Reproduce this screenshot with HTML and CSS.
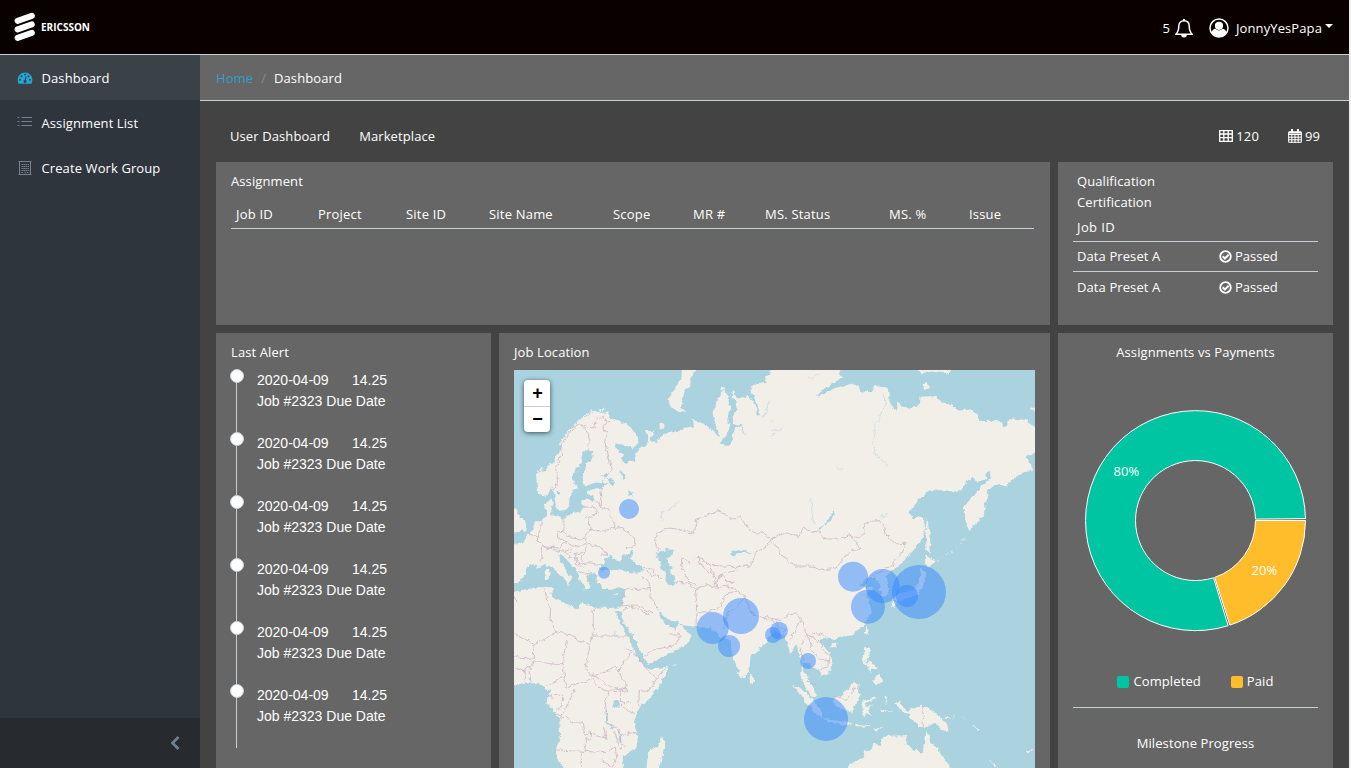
FILE: index.html
```html
<!DOCTYPE html>
<html lang="en">
<head>
<meta charset="utf-8">
<title>Dashboard</title>
<link rel="stylesheet" href="styles.css">
</head>
<body>
<div class="app">
<header class="topbar">
  <div class="brand">
    <svg width="22" height="30" viewBox="0 0 22 30"><g stroke="#fff" stroke-width="6" stroke-linecap="round"><path d="M3.6 8.8 17.8 3.8M3.6 17.4 17.8 12.4M3.6 25.8 17.8 20.8"/></g></svg>
    <span class="brand-name">ERICSSON</span>
  </div>
  <div class="user-area">
    <span class="bell-count">5</span>
    <svg class="bell" width="20" height="20" viewBox="0 0 20 20"><path d="M1.800 16.200c2.200-2 3-4.500 3-8.200 0-3.200 2-5.300 5.200-5.300s5.200 2.100 5.200 5.300c0 3.700.8 6.200 3 8.200z" fill="none" stroke="#fff" stroke-width="1.500" stroke-linejoin="round"/><path d="M9 1h2v2H9zM7.200 17h5.600a2.800 2.500 0 0 1-5.600 0z" fill="#fff"/></svg>
    <svg class="avatar" width="20" height="20" viewBox="0 0 20 20"><circle cx="10" cy="10" r="9" fill="none" stroke="#fff" stroke-width="1.500"/><path d="M2.600 14.800c.4-2.700 2-3.800 4-4a5 5 0 0 0 6.800 0c2 .2 3.600 1.300 4 4A9 9 0 0 1 2.600 14.800z" fill="#fff"/><circle cx="10" cy="7.800" r="4.100" fill="#fff"/></svg>
    <span class="user-name">JonnyYesPapa</span><i class="caret"></i>
  </div>
</header>
<div class="body">
<nav class="sidebar">
  <a class="nav-item active"><svg width="16" height="14" viewBox="0 0 16 14"><path d="M8 1.500a7.500 7.500 0 0 0-6.300 11.300h12.600A7.500 7.500 0 0 0 8 1.500z" fill="#20a8d8"/><g fill="#3a4248"><circle cx="8" cy="3.600" r="1"/><circle cx="4.500" cy="5.200" r="1"/><circle cx="11.500" cy="5.200" r="1"/><circle cx="3" cy="8.800" r="1"/><circle cx="13" cy="8.800" r="1"/><path d="M8.500 5.300 9.500 5.600 8.900 9a1.600 1.600 0 1 1-1.200-.2z"/></g></svg><span>Dashboard</span></a>
  <a class="nav-item"><svg width="16" height="14" viewBox="0 0 16 14"><path d="M4.500 1.500H15M4.500 5.500H15M4.500 9.500H15M.5 1.500h2M.5 5.500h2M.5 9.500h2" stroke="#73818f"/></svg><span>Assignment List</span></a>
  <a class="nav-item"><svg width="16" height="16" viewBox="0 0 16 16"><path d="M2.500 1.500h11v13h-11zM1.500 1.500h13M1.500 14.500h13" fill="none" stroke="#73818f"/><path d="M4.500 4.500H12M4.500 6.500H12M4.500 8.500H12M4.500 10.500H12M4.500 12.500H6.500M10 12.500h2M8.300 11.500v3" stroke="#73818f" stroke-dasharray="1.500 .5"/></svg><span>Create Work Group</span></a>
  <div class="minimizer"><svg width="10" height="14" viewBox="0 0 10 14"><path d="M8.500 1 2.500 7l6 6" fill="none" stroke="#73818f" stroke-width="2.600"/></svg></div>
</nav>
<main class="main">
  <div class="crumbs"><a>Home</a><span class="slash">/</span><span>Dashboard</span></div>
  <div class="tabs">
    <span>User Dashboard</span><span class="tab-two">Marketplace</span>
    <span class="counter push"><svg width="14" height="12" viewBox="0 0 14 12"><path d="M.7.700h12.600v10.600H.7zM0 4h14M0 7.600h14M4.800 0v12M9.200 0v12" fill="none" stroke="#fff" stroke-width="1.300"/></svg>120</span>
    <span class="counter"><svg width="14" height="14" viewBox="0 0 14 14"><path d="M.7 3h12.600v10.300H.7zM0 5.500h14M0 8.200h14M0 10.800h14M3.800 5v9M7 5v9M10.200 5v9" fill="none" stroke="#fff"/><path d="M.7 2.500h12.600v2H.7zM3 0h2v4H3zM9 0h2v4H9z" fill="#fff"/></svg>99</span>
  </div>
  <div class="grid">
    <section class="card assignment">
      <h2>Assignment</h2>
      <div class="thead"><span>Job ID</span><span>Project</span><span>Site ID</span><span>Site Name</span><span>Scope</span><span>MR #</span><span>MS. Status</span><span>MS. %</span><span>Issue</span></div>
    </section>
    <section class="card qualification">
      <h2>Qualification<br>Certification</h2>
      <div class="qhead">Job ID</div>
      <div class="qrow"><span>Data Preset A</span><span class="passed"><svg width="13" height="13" viewBox="0 0 13 13"><circle cx="6.500" cy="6.500" r="5.300" fill="none" stroke="#fff" stroke-width="1.800"/><path d="M3.700 6.300 5.900 8.500 9.700 4.700" fill="none" stroke="#fff" stroke-width="2"/></svg>Passed</span></div>
      <div class="qrow"><span>Data Preset A</span><span class="passed"><svg width="13" height="13" viewBox="0 0 13 13"><circle cx="6.500" cy="6.500" r="5.300" fill="none" stroke="#fff" stroke-width="1.800"/><path d="M3.700 6.300 5.900 8.500 9.700 4.700" fill="none" stroke="#fff" stroke-width="2"/></svg>Passed</span></div>
    </section>
    <section class="card alerts">
      <h2>Last Alert</h2>
      <ul class="timeline">
        <li><div><span class="date">2020-04-09</span><span>14.25</span></div><div>Job #2323 Due Date</div></li>
        <li><div><span class="date">2020-04-09</span><span>14.25</span></div><div>Job #2323 Due Date</div></li>
        <li><div><span class="date">2020-04-09</span><span>14.25</span></div><div>Job #2323 Due Date</div></li>
        <li><div><span class="date">2020-04-09</span><span>14.25</span></div><div>Job #2323 Due Date</div></li>
        <li><div><span class="date">2020-04-09</span><span>14.25</span></div><div>Job #2323 Due Date</div></li>
        <li><div><span class="date">2020-04-09</span><span>14.25</span></div><div>Job #2323 Due Date</div></li>
      </ul>
    </section>
    <section class="card location">
      <h2>Job Location</h2>
      <div class="map">
        <svg width="521" height="398" viewBox="12 12 1563 1194">
          <defs><filter id="coast" filterUnits="userSpaceOnUse" x="-20" y="-20" width="1630" height="1260" color-interpolation-filters="sRGB"><feTurbulence type="fractalNoise" baseFrequency=".06" numOctaves="3" seed="4"/><feDisplacementMap in="SourceGraphic" scale="16" xChannelSelector="R" yChannelSelector="G"/></filter></defs>
          <rect x="12" y="12" width="1563" height="1194" fill="#aad3df"/>
          <g filter="url(#coast)">
          <g fill="#f2efe9">
            <!-- Eurasia and Africa -->
            <path d="M-10 542 28 530 40 532 46 512 60 500 72 478 84 464 100 456 112 450 108 430 104 412 124 400 130 412 122 424 128 434 122 446 136 450 150 452 166 456 190 440 214 436 222 420 216 416 218 402 228 394 240 406 252 402 250 388 232 384 228 376 250 370 274 370 276 362 292 356 276 348 250 352 222 362 216 340 222 320 228 300 246 278 250 256 238 250 222 256 214 270 216 290 196 308 186 324 186 342 196 354 206 362 190 374 180 390 178 412 166 432 148 434 138 420 134 396 132 374 126 364 118 380 96 392 84 382 80 352 78 326 92 318 104 316 112 300 130 290 140 272 154 250 152 234 162 212 176 194 198 176 214 160 236 148 252 134 274 140 296 140 298 154 326 164 352 176 380 202 387 228 370 246 340 238 314 232 322 250 342 266 334 282 348 290 376 284 372 262 396 240 412 240 412 216 408 196 428 194 432 204 422 212 426 230 446 224 452 212 482 196 520 194 520 184 550 186 552 170 540 150 554 166 584 174 608 194 626 214 624 190 610 162 608 136 616 122 622 92 640 76 654 86 656 110 662 130 654 152 658 184 652 210 628 232 652 240 668 220 670 192 690 180 706 210 694 176 672 174 668 152 680 126 676 104 662 92 672 72 680 100 706 90 730 106 742 126 744 150 750 146 742 112 726 84 724 58 770 50 764 32 784 24 774-10H1000L990 24 1000 36 968 50 934 74 920 94 970 68 1018 54 1046 62 1050 74 1090 76 1092 54 1132 66 1140 80 1138 102 1156 136 1166 106 1174 122 1188 128 1210 120 1228 124 1232 92 1276 90 1282 98 1316 114 1334 126 1340 136 1376 128 1400 142 1404 164 1470 166 1480 184 1492 180 1494 156 1546 162 1595 192V254L1546 274 1560 284 1568 316 1540 318 1516 336 1488 358 1470 354 1440 362 1430 380 1436 390 1424 410 1428 430 1420 450 1394 476 1378 496 1366 462 1364 420 1384 394 1402 378 1420 352 1440 334 1444 318 1434 316 1428 336 1402 350 1394 332 1370 344 1352 376 1326 376 1304 372 1256 374 1240 388 1192 442 1206 448 1208 460 1230 452 1244 462 1244 500 1232 526 1214 550 1192 572 1172 596 1158 602 1144 614 1126 630 1138 660 1136 684 1118 690 1108 676 1114 654 1098 644 1096 630 1062 644 1050 660 1068 666 1096 660 1070 684 1074 700 1084 732 1074 754 1060 780 1032 802 996 812 970 820 940 816 932 832 954 856 968 884 964 914 934 930 930 916 910 904 896 892 878 888 880 916 904 954 922 994 902 988 882 958 874 932 876 886 866 858 858 836 840 864 834 830 820 808 800 796 776 816 768 832 738 858 722 870 718 916 708 922 704 932 694 936 682 912 672 884 662 846 658 818 636 820 622 810 616 792 602 784 568 784 520 778 506 766 474 760 450 738 448 752 468 778 494 788 510 772 528 796 546 808 532 832 508 846 470 868 410 894 402 870 386 844 364 800 344 776 330 736 314 740 330 764 344 798 362 832 376 866 396 892 412 910 470 902 468 926 450 956 420 996 394 1020 376 1048 372 1070 384 1110 380 1140 342 1172 334 1230H168L140 1174 138 1150 150 1110 148 1060 132 1036 112 1012 118 976 102 962 84 950 40 954-10 964V682L48 670 86 664 130 664 124 686 136 700 166 712 200 730 208 726 214 708 250 724 300 726 330 724 342 706 344 668 326 664 302 672 276 668 264 650 262 626 244 618 228 624 232 644 244 666 226 674 218 656 204 620 186 600 166 576 148 566 150 582 168 612 186 632 182 644 174 658 158 632 128 606 108 594 86 604 60 594 46 616 44 634 26 650-10 658z"/>
            <path d="M-10 426 22 428 24 448 44 464 48 478 46 496-10 502z"/>
            <path d="M516-10 514 40 488 74 476 100 480 122 510 140 526 138 514 120 522 82 540 56 560-10zM448 172 462 170 464 182 450 188zM632 66 646 64 644 74 632 76z"/>
            <!-- Arctic, Sakhalin and Japan -->
            <path d="M1200 0 1236 22 1260 16 1290 20 1320 22 1330 0zM1234 52 1252 48 1260 66 1240 72zM1560 130 1595 106V134zM1252 452 1256 486 1264 524 1258 540 1260 560 1248 550 1250 520 1246 496zM1246 568 1276 588 1256 602 1244 594zM1234 602 1246 620 1244 644 1236 668 1220 690 1194 696 1156 706 1144 696 1172 680 1204 676 1224 656 1230 628zM1144 702 1156 710 1154 726 1146 720zM1072 782 1078 794 1072 808 1064 800zM966 832 982 830 980 844 964 844z"/>
            <!-- Philippines and Indonesia -->
            <path d="M1064 842 1080 846 1078 872 1066 884 1080 902 1064 894 1058 876zM1096 930 1110 924 1116 948 1100 958 1088 944zM1074 882 1096 898 1102 910 1084 908 1080 920 1074 900zM1036 934 1060 910 1040 930zM848 958 866 962 894 988 914 1008 932 1032 940 1056 924 1050 896 1020 872 986zM938 1058 968 1062 1014 1068 1030 1074 1012 1078 960 1070zM970 1000 990 992 1012 970 1034 946 1046 958 1044 976 1050 986 1038 1014 1026 1038 1004 1030 982 1026zM1056 1004 1100 994 1098 1000 1064 1010 1068 1024 1086 1016 1074 1032 1086 1050 1070 1042 1062 1052 1054 1032zM1152 1010 1176 1008 1176 1024 1194 1034 1230 1016 1266 1034 1298 1058 1320 1094 1294 1088 1276 1068 1254 1082 1236 1086 1216 1072 1196 1044 1170 1032zM1126 986 1132 992 1126 1008 1132 1018 1124 1010zM1036 1074 1080 1078 1078 1082 1036 1080zM1088 1092 1118 1082 1098 1098zM1112 1032 1156 1036 1112 1038zM1302 1052 1324 1056 1340 1038 1330 1052 1312 1060zM1354 1050 1366 1064 1380 1070 1362 1062zM1384 1076 1410 1092 1404 1096z"/>
            <!-- Australia, Madagascar and Sri Lanka -->
            <path d="M980 1226 1006 1206 1060 1174 1066 1150 1080 1156 1092 1134 1110 1136 1116 1118 1136 1106 1150 1112 1196 1110 1186 1134 1206 1146 1232 1160 1240 1152 1246 1096 1254 1098 1262 1132 1286 1150 1300 1178 1318 1196 1330 1226zM408 1226 414 1156 440 1144 458 1110 466 1134 442 1226zM718 920 732 934 732 950 720 954zM1436 1182 1462 1200 1458 1204zM1548 1156 1570 1148 1556 1164zM106 612 118 612 116 642 108 642zM108 586 116 584 114 606zM312 686 328 682 318 690zM490 898 500 896 496 900z"/>
            <path d="M1280 586 1308 568 1330 554 1352 534 1366 514" fill="none" stroke="#f2efe9" stroke-width="2" stroke-dasharray="8 9"/>
            <path d="M186 188 210 162M222 152 246 134M268 134 282 128M150 236 162 216M82 318 100 308" fill="none" stroke="#f2efe9" stroke-width="7" stroke-dasharray="8 3"/>
          </g>
          <!-- Inland seas and lakes -->
          <g fill="#aad3df">
            <path d="M286 578 304 564 312 580 334 584 330 572 352 564 370 552 374 562 356 574 376 590 400 606 400 616 384 620 350 618 324 608 300 616 270 612 274 600zM440 566 456 558 468 548 490 552 488 566 474 572 470 590 488 606 480 620 496 636 494 656 474 656 466 642 468 620 454 604zM972 430 974 444 956 470 928 492 922 488 944 476 960 452zM294 340 304 334 316 352 310 358 296 348zM330 312 342 324 346 340 338 342zM354 376 366 382 368 392 358 388zM308 1004 326 1002 326 1022 308 1024zM142 372 154 378 146 388zM664 566 670 554 704 554 732 560 708 560 680 562 668 572zM270 330 290 320 294 340 280 330z"/>
          </g>
          <g fill="none" stroke="#aad3df" stroke-width="2">
            <path d="M1122 84 1126 120 1110 150 1094 184 1088 226 1100 270 1132 298M784 198 820 186M780 214 802 200M780 160 790 170M902 400 910 470 916 476M456 464 454 440 474 434 510 402M1112 450 1134 446M978 302 996 310M890 30 904 40 920 26 934 28M780 104 760 158M268 378 274 396M314 792 318 812" stroke-opacity=".75"/>
            <path d="M288 1034 292 1068 308 1086M326 1094 332 1130" stroke-width="5"/>
          </g>
          <!-- National borders -->
          <g fill="none" stroke="#cbb5c3" stroke-width="2.400" stroke-linejoin="round">
            <path d="M132 374 142 350 140 296 154 270 158 234 176 204 196 180 212 172 232 186 252 184 262 158 280 154 288 166 278 184 290 206 286 240 298 276 304 314 276 350M212 176 236 204 238 248M284 172 300 166M270 374 272 398 270 424 298 432 300 454 314 474 314 488 338 484 352 500 378 516 376 536 348 548M228 394 262 404 270 420M218 424 248 420 264 430 258 446 236 454 222 452M160 456 158 496 184 516 226 520 240 484 236 454M232 490 290 492 314 484M94 462 92 500 82 518 98 542 146 546 170 528 142 514 144 498 158 496M56 500 84 518M94 544 96 576 92 588M98 542 122 550 140 552 164 556 180 546M170 530 192 542 226 534 228 520M192 544 178 558 196 566 224 556 232 534 270 542 290 566 272 568M196 566 210 598 232 590 276 596M170 558 178 576 196 572 202 602 218 604M224 558 214 580 222 592M204 612 222 622 238 618M452 556 434 526 440 502 476 486 506 490 550 502 560 460 586 450 624 436 644 440 660 460 690 452 724 498 760 502 782 520 760 550 738 562 722 600 684 602 642 600 602 598 562 572 540 590 514 576 516 606M782 520 812 506 828 500 866 514 880 484 904 496 930 498 942 518 980 520 1020 506 1028 520 1056 548 1028 554 1002 576 978 606 944 612 900 600 858 600 812 568 806 544 784 526M1020 508 1046 516 1062 498 1060 476 1078 466 1108 464 1124 484 1130 510 1158 534 1186 532 1172 564 1154 580 1150 602 1124 606M1124 608 1110 622 1084 628 1068 642"/>
            <path d="M104 664 110 704 122 728 120 764 138 798 74 836 12 800M138 798 162 802 170 806 240 836 250 808V720M250 810H352M240 834 228 906 246 930 298 914 318 900 324 918 346 884 368 852M246 924 300 962 332 970 352 960 328 922M72 838 70 876 38 878 12 872M72 876 60 918 62 948M70 886 140 896 158 888 170 820M158 890 164 930 112 962M164 932 168 966 248 938 270 966 296 976 330 972 332 1010 360 1010M192 966 180 1004 154 1050 136 1044 156 1020 158 988H118M146 1056 174 1054 184 1072 220 1070 224 1104 242 1100 240 1120 226 1118V1156L138 1152M226 1156 286 1160 316 1142M298 974 286 1008 292 1070 322 1088 330 1110 380 1098M240 1104 288 1116 280 1080M316 1142 320 1176 304 1204 272 1180M214 1160V1206M332 1130 344 1140 332 1150 312 1094M348 848 388 876 404 904 440 936M340 888 324 922M440 936 466 906M440 938 414 976 386 974M388 974 386 1026M334 968 350 980 346 962M332 1014 374 1048M12 692 24 710M12 906 46 916 46 952M40 914 50 900 60 906M112 986 130 1000M340 670H392L420 664 424 700 446 730M344 676 334 720 380 716 436 746M334 740 358 720 384 728 418 746 432 742M406 870 430 852 486 840 506 828 508 804 476 804M392 632 416 642 420 664M410 612 422 632 440 626 456 642M400 604 424 606 432 620M496 648 538 652 556 668 560 710 558 780M514 608 536 642 556 658M556 670 588 656 622 664 654 660 682 674 704 692M560 742 602 734 634 722 640 690 662 680 686 672M640 786 654 740 680 724 704 694 718 720 722 744 768 758 792 766 790 778M720 738 742 752 776 752 802 758M600 604 618 640 644 622 682 612M622 664 614 646 640 628 652 650 680 648M564 572 576 602 606 622M784 758 816 760 834 746 858 744 876 760 862 776 842 820M800 764 802 784 824 790 820 808M876 764 880 784 894 806 870 844 880 884M896 808 916 820 940 828 932 842 958 870 954 888M894 808 904 840 900 850 928 878 954 884 954 902 930 912M904 804 930 800 952 814M890 942 916 958M972 994 1004 1000 1024 990 1028 966 1050 968M1240 1026V1084M326 1100 334 1124"/>
          </g>
          </g>
          <g fill="#3388ff" fill-opacity=".5">
            <circle cx="357" cy="429" r="30"/><circle cx="282" cy="620" r="18"/>
            <circle cx="608" cy="786" r="48"/><circle cx="693" cy="750" r="54"/><circle cx="657" cy="840" r="33"/>
            <circle cx="789" cy="807" r="24"/><circle cx="807" cy="794" r="27"/><circle cx="894" cy="885" r="24"/>
            <circle cx="1029" cy="632" r="45"/><circle cx="1118" cy="660" r="51"/><circle cx="1074" cy="722" r="51"/>
            <circle cx="1227" cy="678" r="81"/><circle cx="1191" cy="690" r="33"/><circle cx="948" cy="1059" r="66"/>
          </g>
        </svg>
        <div class="zoom"><span>+</span><span>−</span></div>
      </div>
    </section>
    <section class="card payments">
      <h2>Assignments vs Payments</h2>
      <svg class="donut" width="245" height="246" viewBox="-122.500 -122.500 245 246">
        <path d="M110-1.900A110 110 0 1 0 32.600 105.200L18 57.300A60 60 0 1 1 60-1.400z" fill="#00c5a2" stroke="#fff"/>
        <path d="M110 0A110 110 0 0 1 34.400 104.600L19.200 56.900A60 60 0 0 0 60 0z" fill="#ffbd2c" stroke="#fff"/>
        <text x="-69" y="-45">80%</text><text x="69" y="54">20%</text>
      </svg>
      <div class="legend"><span><i class="swatch green"></i>Completed</span><span><i class="swatch amber"></i>Paid</span></div>
      <h2 class="milestone">Milestone Progress</h2>
    </section>
  </div>
</main>
</div>
</div>
</body>
</html>
```
FILE: styles.css
```css
* { box-sizing: border-box; }
body { margin: 0; height: 768px; overflow: hidden; background: #f0f0f0; color: #fff; font: 13px/21px "Open Sans", "Noto Sans", sans-serif; letter-spacing: .1px; }
svg { display: block; flex: none; }
h2 { margin: 0; font: inherit; }
.app { width: 1349px; height: 768px; display: flex; flex-direction: column; overflow: hidden; }
.topbar { height: 55px; flex: none; display: flex; justify-content: space-between; align-items: center; padding: 0 16px 0 14px; background: #0a0000; border-bottom: 1px solid #c8ced3; }
.brand { display: flex; align-items: center; gap: 5px; }
.brand-name { font: 700 10px/14px "Open Sans", sans-serif; letter-spacing: 0; }
.user-area { display: flex; align-items: center; padding-top: 2px; }
.bell { margin: 0 15px 0 4px; }
.avatar { margin-right: 7px; }
.caret { margin: -4px 0 0 3px; border: 4px solid transparent; border-top-color: #fff; border-bottom: 0; }
.body { flex: 1; display: flex; min-height: 0; }
.sidebar { width: 200px; flex: none; display: flex; flex-direction: column; background: #2f353d; }
.nav-item { height: 45px; display: flex; align-items: center; gap: 8.500px; padding: 1px 17px 0; }
.active { background: #3a4248; }
.minimizer { margin-top: auto; height: 50px; display: flex; justify-content: flex-end; align-items: center; padding-right: 20px; background: #272b2f; }
.main { flex: 1; min-width: 0; display: flex; flex-direction: column; background: #434343; }
.crumbs { height: 46px; flex: none; display: flex; align-items: center; padding: 2px 16px 0; background: #666; border-bottom: 1px solid #c8ced3; }
.crumbs a { color: #2f9fcd; }
.slash { padding: 0 8px; color: #828a91; }
.tabs { height: 61px; flex: none; display: flex; align-items: center; padding: 9px 29px 0 30px; }
.tab-two { margin-left: 29px; }
.counter { display: flex; align-items: center; gap: 3px; margin-left: 29px; }
.push { margin-left: auto; }
.grid { flex: none; padding: 0 16px; display: grid; grid-template-columns: 275px 551px 275px; grid-template-rows: 163px 600px; gap: 8px; }
.card { background: #666; padding: 9px 15px; min-width: 0; }
.assignment { grid-column: span 2; }
.thead { display: grid; grid-template-columns: 82px 88px 83px 124px 80px 72px 124px 80px 1fr; width: 803px; height: 37px; padding: 12px 0 0 5px; border-bottom: 1px solid #c8ced3; letter-spacing: .2px; }
.qualification h2 { padding-left: 4px; }
.qhead { height: 29px; padding: 4px 4px 0; border-bottom: 1px solid #c8ced3; letter-spacing: .4px; }
.qrow { height: 30px; display: grid; grid-template-columns: 142px 1fr; align-items: center; padding-left: 4px; }
.qrow:nth-of-type(2) { border-bottom: 1px solid #c8ced3; }
.passed { display: flex; align-items: center; gap: 3px; letter-spacing: 0; }
.timeline { list-style: none; margin: 7px 0 0 5px; padding: 0; height: 378px; border-left: 1px solid #c8ced3; font: 14px/21px "Liberation Sans", Arial, sans-serif; letter-spacing: 0; }
.timeline li { position: relative; height: 63px; padding-left: 20px; }
.timeline li::before { content: ""; position: absolute; left: -7px; top: -1px; width: 12px; height: 12px; border-radius: 50%; background: #fff; border: 1px solid #c8ced3; }
.date { display: inline-block; width: 95px; }
.map { position: relative; width: 521px; height: 398px; margin-top: 7px; overflow: hidden; }
.zoom { position: absolute; left: 10px; top: 10px; width: 26px; height: 52px; border-radius: 4px; background: #fff; box-shadow: 0 1px 5px rgba(0,0,0,.65); color: #000; font: bold 18px/26px "Liberation Sans", Arial, sans-serif; letter-spacing: 0; text-indent: 1px; text-align: center; }
.zoom span { display: block; height: 26px; }
.zoom span + span { border-top: 1px solid #ccc; line-height: 25px; }
.payments { text-align: center; }
.donut { margin-top: 35px; }
.donut text { fill: #fff; font: 13px "Open Sans", sans-serif; text-anchor: middle; }
.legend { height: 64px; display: flex; justify-content: center; align-items: center; gap: 30px; padding-top: 12px; border-bottom: 1px solid #c8ced3; }
.legend span { display: flex; align-items: center; gap: 4px; }
.swatch { width: 12px; height: 12px; border-radius: 2px; }
.green { background: #00c5a2; }
.amber { background: #ffbd2c; }
.milestone { margin-top: 25px; }
```
